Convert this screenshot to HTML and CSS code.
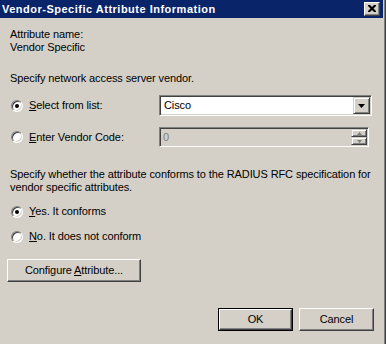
FILE: index.html
```html
<!DOCTYPE html>
<html>
<head>
<meta charset="utf-8">
<link rel="stylesheet" href="styles.css">
</head>
<body>
<div class="frame">
  <div class="win">
    <div class="titlebar">
      <span class="title">Vendor-Specific Attribute Information</span>
      <span class="close">
        <svg width="8" height="7" viewBox="0 0 8 7"><path d="M0 0h2l2 2 2-2h2v1l-2.5 2.5L8 6v1H6L4 5 2 7H0V6l2.5-2.5L0 1z" fill="#000"/></svg>
      </span>
    </div>
    <div class="body">
      <div class="attr">
        <div>Attribute name:</div>
        <div>Vendor Specific</div>
      </div>
      <div class="prompt">Specify network access server vendor.</div>
      <div class="opt-row row1">
        <div class="radio-label"><span class="radio checked"></span><span><u>S</u>elect from list:</span></div>
        <div class="combo">
          <span class="combo-text">Cisco</span>
          <span class="combo-btn">
            <svg width="7" height="4" viewBox="0 0 7 4"><path d="M0 0h7L3.5 4z" fill="#000"/></svg>
          </span>
        </div>
      </div>
      <div class="opt-row row2">
        <div class="radio-label"><span class="radio"></span><span><u>E</u>nter Vendor Code:</span></div>
        <div class="spin">
          <span class="spin-text">0</span>
          <span class="spin-btns">
            <span class="spin-btn"><svg width="5" height="3" viewBox="0 0 5 3"><path d="M2.5 0L5 3H0z" fill="#808080"/></svg></span>
            <span class="spin-btn"><svg width="5" height="3" viewBox="0 0 5 3"><path d="M0 0h5L2.5 3z" fill="#808080"/></svg></span>
          </span>
        </div>
      </div>
      <div class="para">Specify whether the attribute conforms to the RADIUS RFC specification for vendor specific attributes.</div>
      <div class="radio-label yes"><span class="radio checked"></span><span><u>Y</u>es. It conforms</span></div>
      <div class="radio-label no"><span class="radio"></span><span><u>N</u>o. It does not conform</span></div>
      <div class="btn configure"><span>Configure <u>A</u>ttribute...</span></div>
      <div class="footer">
        <div class="btn default"><span class="btn-inner">OK</span></div>
        <div class="btn cancel">Cancel</div>
      </div>
    </div>
  </div>
</div>
</body>
</html>
```
FILE: styles.css
```css
* { box-sizing: border-box; }
html, body { margin: 0; padding: 0; }
body {
  width: 386px;
  height: 344px;
  overflow: hidden;
  background: #d4d0c8;
  font-family: "Liberation Sans", Arial, sans-serif;
  font-size: 11px;
  line-height: 13px;
  letter-spacing: -0.1px;
  color: #000;
}
u { text-decoration: underline; text-underline-offset: 1px; }
.frame {
  width: 386px;
  height: 344px;
  border-right: 1px solid #404040;
}
.win {
  height: 100%;
  border-right: 1px solid #808080;
  padding-right: 1px;
  display: flex;
  flex-direction: column;
}
.titlebar {
  height: 18px;
  background: #0a246a;
  display: flex;
  align-items: center;
  justify-content: space-between;
  padding-left: 2px;
  padding-right: 3px;
}
.title {
  color: #fff;
  font-weight: bold;
  font-size: 11px;
  line-height: 13px;
  letter-spacing: 0.5px;
}
.close {
  width: 16px;
  height: 14px;
  background: #d4d0c8;
  border: 1px solid;
  border-color: #fff #404040 #404040 #fff;
  box-shadow: inset -1px -1px 0 #808080;
  display: flex;
  align-items: center;
  justify-content: center;
  padding-right: 1px;
  padding-bottom: 1px;
}
.body {
  padding-left: 10px;
  padding-right: 9px;
  display: flex;
  flex-direction: column;
}
.attr { margin-top: 10px; }
.prompt { margin-top: 18px; }
.opt-row {
  display: grid;
  grid-template-columns: 149px auto;
  align-items: center;
}
.row1 { margin-top: 10px; height: 21px; }
.row2 { margin-top: 11px; height: 20px; }
.radio-label {
  display: flex;
  align-items: center;
  gap: 6px;
  padding-left: 1px;
}
.radio {
  width: 12px;
  height: 12px;
  border-radius: 50%;
  background: #fff;
  border: 1px solid;
  border-color: #808080 #fff #fff #808080;
  box-shadow: inset 1px 1px 0 #404040, inset -1px -1px 0 #d4d0c8;
  display: flex;
  align-items: center;
  justify-content: center;
  flex: none;
}
.radio.checked::after {
  content: "";
  width: 4px;
  height: 4px;
  border-radius: 50%;
  background: #000;
}
.combo {
  width: 213px;
  height: 21px;
  background: #fff;
  border: 1px solid;
  border-color: #808080 #fff #fff #808080;
  box-shadow: inset 1px 1px 0 #404040, inset -1px -1px 0 #d4d0c8;
  display: flex;
  align-items: stretch;
  justify-content: space-between;
  padding: 1px;
}
.combo-text { padding-left: 3px; line-height: 17px; }
.combo-btn {
  width: 17px;
  background: #d4d0c8;
  border: 1px solid;
  border-color: #d4d0c8 #404040 #404040 #d4d0c8;
  box-shadow: inset 1px 1px 0 #fff, inset -1px -1px 0 #808080;
  display: flex;
  align-items: center;
  justify-content: center;
}
.spin {
  width: 210px;
  height: 20px;
  background: #d4d0c8;
  border: 1px solid;
  border-color: #808080 #fff #fff #808080;
  box-shadow: inset 1px 1px 0 #404040, inset -1px -1px 0 #d4d0c8;
  display: flex;
  justify-content: space-between;
  padding: 1px 1px 1px 2px;
}
.spin-text { color: #808080; line-height: 16px; padding-left: 1px; }
.spin-btns {
  width: 16px;
  display: flex;
  flex-direction: column;
}
.spin-btn {
  flex: 1;
  background: #d4d0c8;
  border: 1px solid;
  border-color: #d4d0c8 #404040 #404040 #d4d0c8;
  box-shadow: inset 1px 1px 0 #fff, inset -1px -1px 0 #808080;
  display: flex;
  align-items: center;
  justify-content: center;
}
.para { margin-top: 21px; margin-right: -9px; }
.yes { margin-top: 11px; }
.no { margin-top: 12px; }
.btn {
  height: 23px;
  width: 75px;
  background: #d4d0c8;
  border: 1px solid;
  border-color: #fff #404040 #404040 #fff;
  box-shadow: inset -1px -1px 0 #808080;
  display: flex;
  align-items: center;
  justify-content: center;
  padding-bottom: 1px;
}
.configure {
  margin-top: 16px;
  margin-left: -3px;
  width: 134px;
}
.footer {
  margin-top: 26px;
  display: flex;
  justify-content: flex-end;
  gap: 6px;
}
.btn.default {
  border: 1px solid #000;
  box-shadow: none;
  padding: 0;
}
.btn-inner {
  width: 100%;
  height: 100%;
  border: 1px solid;
  border-color: #fff #404040 #404040 #fff;
  box-shadow: inset -1px -1px 0 #808080;
  display: flex;
  align-items: center;
  justify-content: center;
  padding-bottom: 1px;
}
```
